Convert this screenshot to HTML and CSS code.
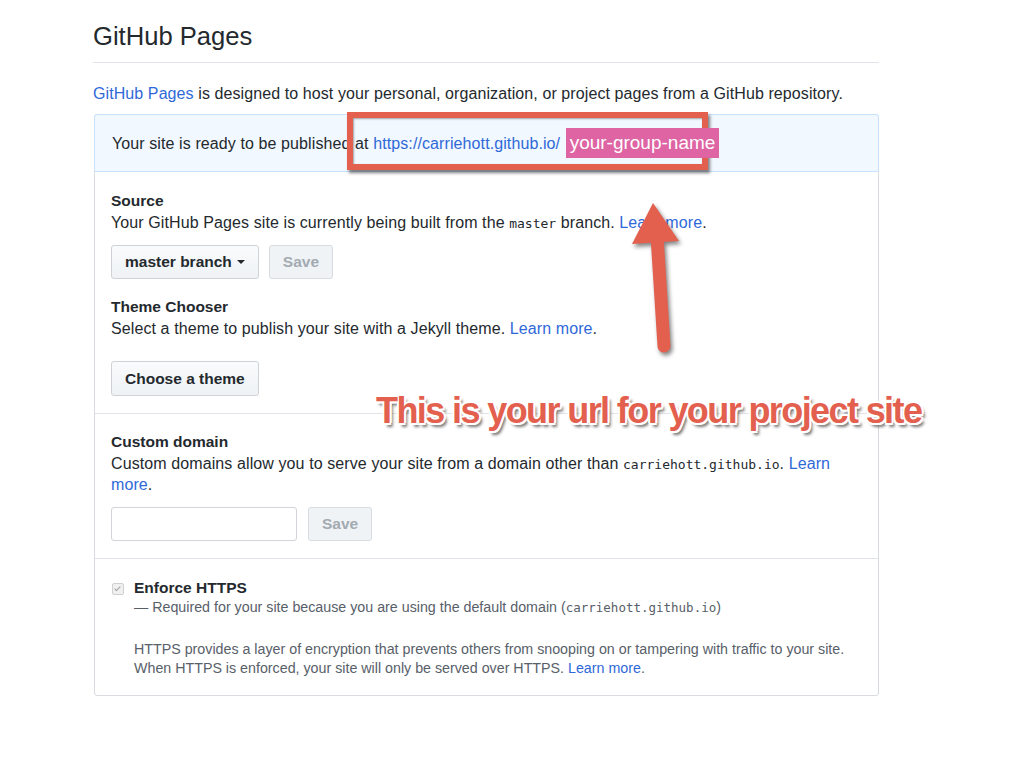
FILE: index.html
```html
<!DOCTYPE html>
<html>
<head>
<meta charset="utf-8">
<link rel="stylesheet" href="styles.css">
</head>
<body>
<div class="page">
  <h2 class="title">GitHub Pages</h2>
  <p class="intro"><a class="link" href="#">GitHub Pages</a> is designed to host your personal, organization, or project pages from a GitHub repository.</p>
  <div class="box">
    <div class="flash">Your site is ready to be published at <a class="link" href="#">https://carriehott.github.io/</a></div>
    <div class="section s1">
      <div class="heading">Source</div>
      <div class="desc">Your GitHub Pages site is currently being built from the <span class="mono">master</span> branch. <a class="link" href="#">Learn more</a>.</div>
      <div class="row r1">
        <button class="btn">master branch <span class="caret"></span></button>
        <button class="btn disabled">Save</button>
      </div>
      <div class="heading h2">Theme Chooser</div>
      <div class="desc">Select a theme to publish your site with a Jekyll theme. <a class="link" href="#">Learn more</a>.</div>
      <div class="row r2">
        <button class="btn tall">Choose a theme</button>
      </div>
    </div>
    <div class="section s2">
      <div class="heading">Custom domain</div>
      <div class="desc">Custom domains allow you to serve your site from a domain other than <span class="mono">carriehott.github.io</span>. <a class="link" href="#">Learn more</a>.</div>
      <div class="row r1 wide">
        <input class="input" type="text">
        <button class="btn disabled">Save</button>
      </div>
    </div>
    <div class="section s3">
      <div class="check"><span class="checkmark"></span></div>
      <div class="enforce">
        <div class="eh">Enforce HTTPS</div>
        <div class="note">— Required for your site because you are using the default domain (<span class="mono sm">carriehott.github.io</span>)</div>
        <p class="help">HTTPS provides a layer of encryption that prevents others from snooping on or tampering with traffic to your site.<br>When HTTPS is enforced, your site will only be served over HTTPS. <a class="link" href="#">Learn more</a>.</p>
      </div>
    </div>
  </div>
</div>

<div class="redbox"></div>
<div class="pink">your-group-name</div>
<svg class="arrow" width="1024" height="768" viewBox="0 0 1024 768">
  <line x1="657" y1="236" x2="664" y2="346" stroke="#e3604f" stroke-width="13" stroke-linecap="round"/>
  <polygon points="653,203 632,244 679,241" fill="#e3604f"/>
</svg>
<div class="callout">This is your url for your project site</div>
</body>
</html>
```
FILE: styles.css
```css
body {
  margin: 0;
  font-family: "Liberation Sans", Arial, sans-serif;
  color: #24292e;
  background: #fff;
}
.page {
  margin-left: 93px;
  width: 786px;
  padding-top: 21px;
}
.title {
  margin: 0;
  font-size: 25.6px;
  font-weight: normal;
  line-height: 31px;
  padding-bottom: 10px;
  border-bottom: 1px solid #e1e4e8;
}
.intro {
  margin: 20px 0 10px;
  font-size: 16px;
  letter-spacing: 0.09px;
  line-height: 21px;
}
.link {
  color: #2f69d8;
  text-decoration: none;
}
.box {
  border: 1px solid #d8dbdf;
  border-radius: 3px;
  margin-left: 1px;
}
.flash {
  background: #f1f8ff;
  border: 1px solid #c8e1ff;
  margin: -1px -1px 0;
  border-radius: 3px 3px 0 0;
  padding: 18px 17px 17px;
  font-size: 16px;
  letter-spacing: 0.1px;
  line-height: 21px;
}
.section {
  padding: 17px 16px 17px;
  border-top: 1px solid #e1e4e8;
}
.flash + .section { border-top: none; }
.s1 { padding-top: 18px; }
.heading {
  font-size: 15.5px;
  font-weight: bold;
  line-height: 21px;
  margin-bottom: 1px;
}
.h2 { margin-top: 17px; }
.desc {
  font-size: 16px;
  letter-spacing: 0.1px;
  line-height: 21px;
}
.mono {
  font-family: "DejaVu Sans Mono", monospace;
  font-size: 13px;
  letter-spacing: 0;
  line-height: 1;
}
.mono.sm { font-size: 12.5px; }
.row {
  display: flex;
  gap: 10px;
}
.row.wide { gap: 11px; }
.r1 { margin-top: 12px; }
.r2 { margin-top: 22px; }
.btn {
  height: 34px;
  padding: 0 13px;
  font-family: "Liberation Sans", Arial, sans-serif;
  font-size: 15.5px;
  font-weight: bold;
  color: #24292e;
  background: linear-gradient(#fafbfc, #eff3f6 90%);
  border: 1px solid #cfd3d7;
  border-radius: 3px;
  display: flex;
  align-items: center;
  gap: 5px;
}
.btn.tall { height: 35px; }
.btn.disabled {
  color: #a3aab1;
  background: #eff3f6;
  border-color: #d8dbdf;
}
.caret {
  width: 0;
  height: 0;
  border-left: 4px solid transparent;
  border-right: 4px solid transparent;
  border-top: 4px solid #24292e;
}
.input {
  width: 186px;
  height: 34px;
  box-sizing: border-box;
  border: 1px solid #d1d5da;
  border-radius: 3px;
  margin: 0;
}
.s3 {
  display: flex;
  padding: 18px 16px 17px 17px;
}
.check {
  width: 10px;
  height: 10px;
  margin-top: 6px;
  border: 1px solid #d0d0d0;
  border-radius: 2px;
  background: #f0f0f0;
  position: relative;
  flex: none;
}
.checkmark {
  position: absolute;
  left: 3px;
  top: 1px;
  width: 2px;
  height: 5px;
  border: solid #a0a0a0;
  border-width: 0 1.5px 1.5px 0;
  transform: rotate(45deg);
}
.enforce { margin-left: 10px; }
.eh {
  font-size: 15.5px;
  font-weight: bold;
  line-height: 21px;
}
.note {
  font-size: 14.25px;
  line-height: 19px;
  color: #586069;
}
.help {
  margin: 23px 0 0;
  font-size: 14.25px;
  line-height: 19px;
  color: #586069;
}
.redbox {
  position: absolute;
  left: 347px;
  top: 112px;
  width: 349px;
  height: 46px;
  border: 6px solid #e3604f;
  box-shadow: 2px 3px 3px rgba(40,40,40,.6), inset 1px 1px 2px rgba(40,40,40,.4);
}
.pink {
  position: absolute;
  left: 566px;
  top: 128px;
  width: 153px;
  height: 30px;
  background: #de64a3;
  color: #fff;
  font-size: 19px;
  line-height: 30px;
  text-align: center;
}
.arrow {
  position: absolute;
  left: 0;
  top: 0;
  pointer-events: none;
  filter: drop-shadow(2px 3px 2px rgba(30,30,30,.55));
}
.callout {
  position: absolute;
  left: 376px;
  top: 390px;
  font-size: 36px;
  font-weight: bold;
  letter-spacing: -1.6px;
  line-height: 42px;
  color: #e3604f;
  white-space: nowrap;
  text-shadow:
    2px 0 0 #fff, -2px 0 0 #fff, 0 2px 0 #fff, 0 -2px 0 #fff,
    1.5px 1.5px 0 #fff, -1.5px 1.5px 0 #fff, 1.5px -1.5px 0 #fff, -1.5px -1.5px 0 #fff,
    3px 4px 3px rgba(0,0,0,.55);
}
```
